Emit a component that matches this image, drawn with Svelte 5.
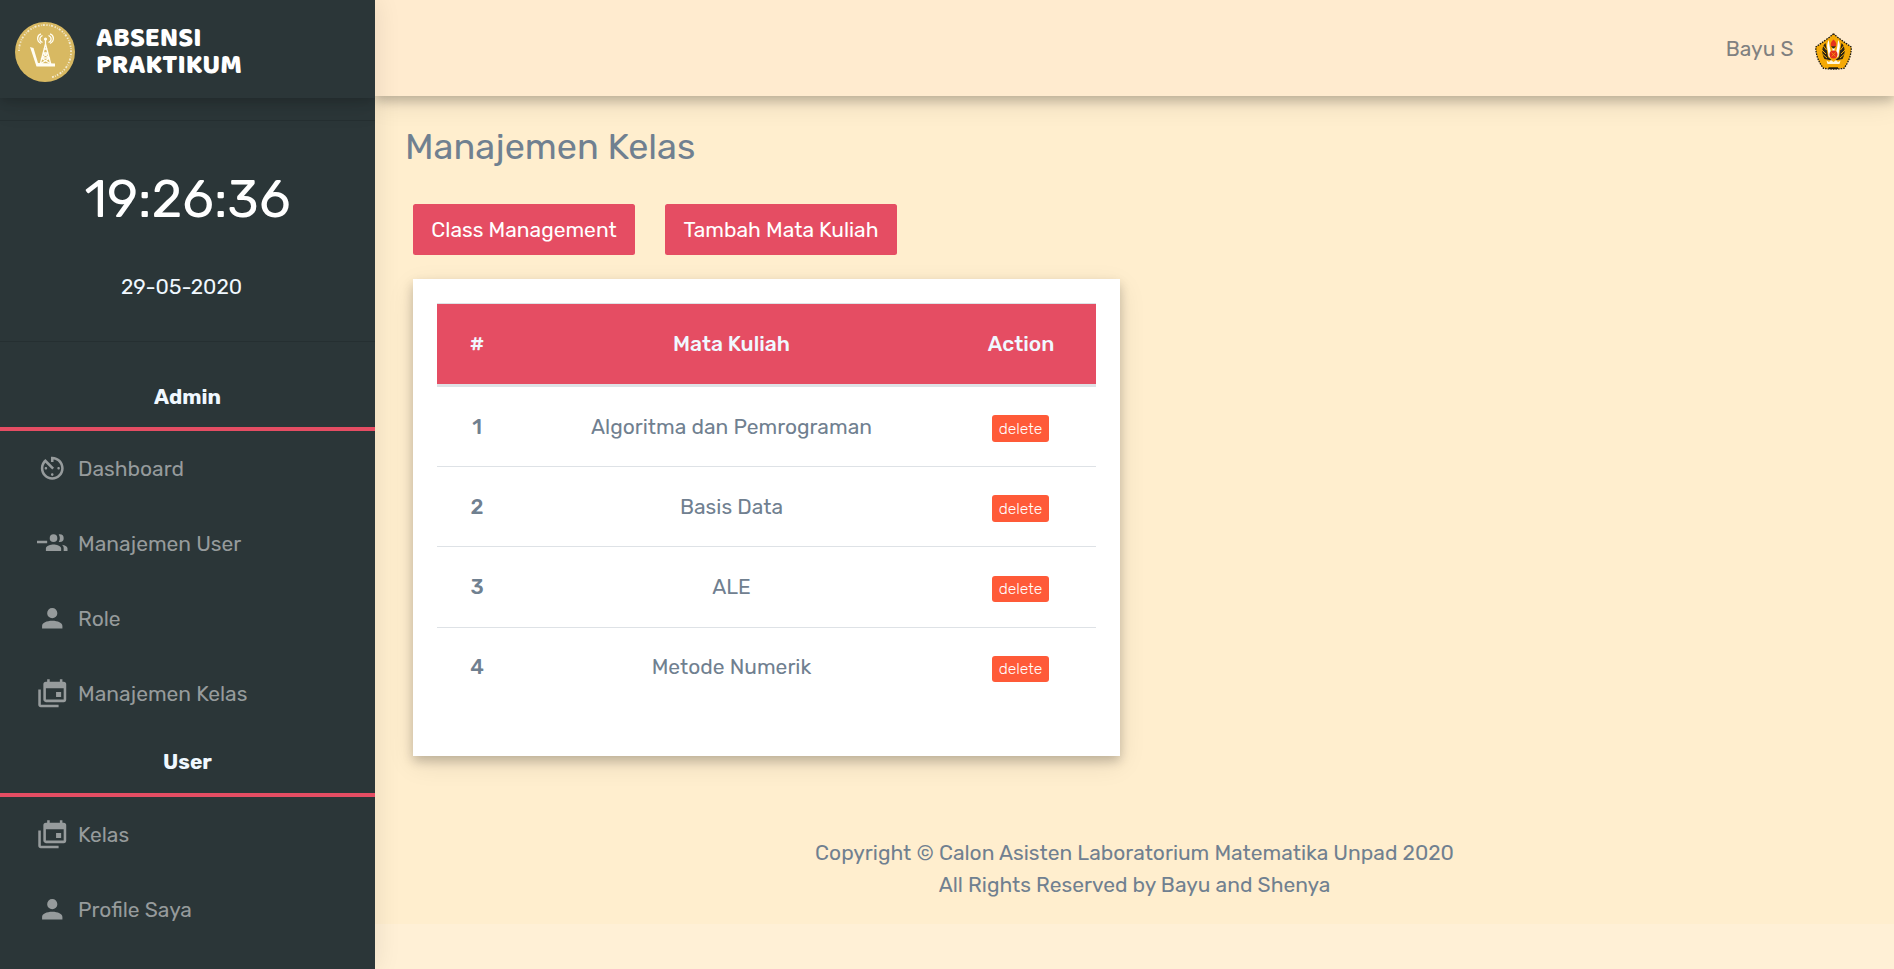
<script>
  const timer = 'M11 17c0 .55.45 1 1 1s1-.45 1-1-.45-1-1-1-1 .45-1 1zm0-14v4h2V5.08c3.39.49 6 3.39 6 6.92 0 3.87-3.13 7-7 7s-7-3.13-7-7c0-1.68.59-3.22 1.58-4.42L12 13l1.41-1.41-6.8-6.8v.02C4.42 6.45 3 9.05 3 12c0 4.97 4.02 9 9 9 4.97 0 9-4.03 9-9s-4.03-9-9-9h-1zm7 9c0-.55-.45-1-1-1s-1 .45-1 1 .45 1 1 1 1-.45 1-1zM6 12c0 .55.45 1 1 1s1-.45 1-1-.45-1-1-1-1 .45-1 1z';
  const group = 'M13 13c-2 0-6 1-6 3v2h12v-2c0-2-4-3-6-3m6.62.16c.83.72 1.38 1.66 1.38 2.84v2h3v-2c0-1.54-2.37-2.5-4.38-2.84M13 11a3 3 0 0 0 3-3 3 3 0 0 0-3-3 3 3 0 0 0-3 3 3 3 0 0 0 3 3m5 0a3 3 0 0 0 3-3 3 3 0 0 0-3-3c-.32 0-.63.05-.92.14.57.81.92 1.8.92 2.86s-.35 2.04-.92 2.85c.29.1.6.15.92.15M8 10H0v2h8v-2z';
  const person = 'M12 4a4 4 0 0 1 4 4 4 4 0 0 1-4 4 4 4 0 0 1-4-4 4 4 0 0 1 4-4m0 10c4.42 0 8 1.79 8 4v2H4v-2c0-2.21 3.58-4 8-4z';
  const calendar = 'M21 17V8H7v9h14m0-14a2 2 0 0 1 2 2v12a2 2 0 0 1-2 2H7c-1.11 0-2-.9-2-2V5a2 2 0 0 1 2-2h1V1h2v2h8V1h2v2h1M3 21h14v2H3c-1.11 0-2-.9-2-2V9h2v12m16-6h-4v-4h4v4z';

  const sections = [
    {
      title: 'Admin',
      items: [
        { label: 'Dashboard', icon: timer },
        { label: 'Manajemen User', icon: group },
        { label: 'Role', icon: person },
        { label: 'Manajemen Kelas', icon: calendar }
      ]
    },
    {
      title: 'User',
      items: [
        { label: 'Kelas', icon: calendar },
        { label: 'Profile Saya', icon: person }
      ]
    }
  ];

  const courses = ['Algoritma dan Pemrograman', 'Basis Data', 'ALE', 'Metode Numerik'];
</script>

<div class="page">
  <aside class="sidebar">
    <div class="brand">
      <svg class="seal" viewBox="0 0 60 60" aria-hidden="true">
        <circle cx="30" cy="30" r="30" fill="#d8b962" />
        <path d="M4 29A26 26 0 0 1 56 29A26 26 0 0 1 36 55.5" fill="none" stroke="#f3ead0" stroke-width="1.8" stroke-dasharray="1.3 1.5 .7 1.2 2 1.7" />
        <g fill="none" stroke="#fffdf2" stroke-width="1.3">
          <path d="M30.500 17V22L25 43M30.500 22L36 43M28.500 27H32.500M27.500 31L34 35.500M33.500 31L27 35.500M26 36L36 42M35 36L25 42M27.500 31H33.500M26.500 36H35" />
          <path d="M27.500 20.500C24 19 24 15 27.500 13.500M33.500 20.500C37 19 37 15 33.500 13.500M26 21.500C21 19 22 13 26 11.800M35 21.500C40 19 39 13 35 11.800" stroke-width="1.3" />
        </g>
        <circle cx="30.5" cy="17" r="1.6" fill="#fffdf2" />
        <path d="M15 25L18.500 26L23 41L40 41.500V44.500H21.500Z" fill="#fffdf2" />
      </svg>
      <div class="brand-name">ABSENSI<br />PRAKTIKUM</div>
    </div>
    <div class="clock">
      <div class="time">19:26:36</div>
      <div class="date">29-05-2020</div>
    </div>
    {#each sections as section}
      <section class="group">
        <h2>{section.title}</h2>
        <ul>
          {#each section.items as item}
            <li>
              <svg viewBox="0 0 24 24" aria-hidden="true"><path d={item.icon} /></svg>
              <span>{item.label}</span>
            </li>
          {/each}
        </ul>
      </section>
    {/each}
  </aside>

  <div class="main">
    <header class="topbar">
      <span>Bayu S</span>
      <svg class="crest" viewBox="0 0 37 37" aria-hidden="true">
        <path d="M18.500 .7C23 5 30 9.500 36.200 14C36.500 22 33.500 29 29 35.300C22 36.300 15 36.300 8.500 35.300C3.500 29 .8 22 .8 14C7 9.500 14 5 18.500 .7Z" fill="#f5a906" stroke="#1c1810" stroke-width="1.3" stroke-dasharray="1.6 1" />
        <path d="M10.500 10C7 13 6 20 9.500 26L17 27.500L13 24L12 18ZM26.500 10C30 13 31 20 27.500 26L20 27.500L24 24L25 18Z" fill="#2b2415" />
        <path d="M8.500 13L11.500 17M7 17L11 21M7.500 21L12 25M28.500 13L25.500 17M30 17L26 21M29.500 21L25 25" stroke="#f5a906" stroke-width="1" />
        <path d="M13.800 7C11.500 11 12 15 13 18L13.500 23L15.500 25L15.800 19L14.800 14ZM23.200 7C25.500 11 25 15 24 18L23.500 23L21.500 25L21.200 19L22.200 14Z" fill="#fff" />
        <path d="M17.500 15H19.500V19H17.500Z" fill="#fff" />
        <path d="M18.500 6.500C21.300 9 21.800 11 21 13.500H16C15.200 11 15.700 9 18.500 6.500Z" fill="#e6321c" />
        <path d="M16 13.200H21L19 15.500H18Z" fill="#2b2415" />
        <circle cx="18.5" cy="21.5" r="4" fill="#e6321c" />
        <path d="M16.500 19.500L20.500 23.500M20.500 19.500L16.500 23.500" stroke="#f5a906" stroke-width=".7" />
        <path d="M11.500 27.500L14 29L16 27L18.500 29L21 27L23 29L25.500 27.500L24.500 31H12.500Z" fill="#fff7dc" />
        <path d="M13.500 35.200H23" stroke="#1c1810" stroke-width="1.8" />
      </svg>
    </header>

    <main class="content">
      <h1>Manajemen Kelas</h1>
      <div class="actions">
        <button class="primary first">Class Management</button>
        <button class="primary second">Tambah Mata Kuliah</button>
      </div>
      <div class="card">
        <table>
          <thead>
            <tr><th class="num">#</th><th class="name">Mata Kuliah</th><th class="act">Action</th></tr>
          </thead>
          <tbody>
            {#each courses as course, i}
              <tr>
                <th>{i + 1}</th>
                <td>{course}</td>
                <td><button class="delete">delete</button></td>
              </tr>
            {/each}
          </tbody>
        </table>
      </div>
      <footer>
        <div>Copyright © Calon Asisten Laboratorium Matematika Unpad 2020</div>
        <div>All Rights Reserved by Bayu and Shenya</div>
      </footer>
    </main>
  </div>
</div>

<style>
  :global(body) {
    margin: 0;
    overflow: hidden;
  }
  .page {
    display: flex;
    height: 969px;
    background: #fff0d6;
    font-family: Rubik, Inter, sans-serif;
    font-size: 21px;
    line-height: 32px;
    color: slategray;
  }
  h1, h2, ul {
    margin: 0;
    padding: 0;
  }
  .sidebar {
    width: 375px;
    flex: none;
    background: #2b3638;
    box-shadow: 1px 0 25px rgba(0, 0, 0, 0.09);
    position: relative;
    z-index: 3;
  }
  .brand {
    height: 98px;
    box-sizing: border-box;
    padding: 6px 0 0 15px;
    display: flex;
    align-items: center;
    gap: 21px;
    box-shadow: 0 4px 9px rgba(0, 0, 0, 0.14), 0 7px 25px rgba(0, 0, 0, 0.1);
    clip-path: inset(0 0 -40px 0);
  }
  .seal {
    width: 60px;
    height: 60px;
  }
  .brand-name {
    font: 800 27.2px/26.6px "Baloo 2", "Noto Sans", sans-serif;
    color: #fff;
    padding-top: 2px;
  }
  .clock {
    margin-top: 22px;
    height: 222px;
    box-sizing: border-box;
    border: solid #252f31;
    border-width: 1px 0;
    text-align: center;
  }
  .time {
    color: #fff;
    font-size: 52.5px;
    line-height: 64px;
    padding-top: 46px;
  }
  .date {
    color: #f0f8ff;
    padding: 39.5px 12px 0 0;
  }
  .group h2 {
    box-sizing: border-box;
    height: 89px;
    padding-top: 39px;
    border-bottom: 4px solid #e54d63;
    text-align: center;
    font-size: 21px;
    line-height: 32px;
    font-weight: 700;
    color: #f0f8ff;
  }
  .group + .group h2 {
    height: 66px;
    padding-top: 15px;
  }
  .group ul {
    list-style: none;
  }
  li {
    height: 75px;
    display: flex;
    align-items: center;
    padding-left: 37px;
    gap: 10.5px;
    color: #969b9c;
  }
  li svg {
    width: 30.5px;
    height: 30.5px;
    margin-top: -1.5px;
    fill: currentColor;
    flex: none;
  }
  .main {
    flex: 1;
    min-width: 0;
  }
  .topbar {
    height: 96px;
    box-sizing: border-box;
    padding: 0 42px 0 0;
    background: #ffebcf;
    display: flex;
    justify-content: flex-end;
    align-items: center;
    gap: 21.5px;
    color: #808080;
    position: relative;
    z-index: 2;
    box-shadow: 0 5px 10px rgba(0, 0, 0, 0.2), 0 7.5px 25px rgba(0, 0, 0, 0.1);
  }
  .topbar span {
    padding-top: 2px;
  }
  .crest {
    width: 37px;
    height: 37px;
    margin-top: 6px;
  }
  .content {
    height: 828px;
    box-sizing: border-box;
    background: #ffeece;
    padding: 29px 0 0;
  }
  h1 {
    font-size: 36px;
    line-height: 44px;
    font-weight: 400;
    padding-left: 30px;
  }
  .actions {
    display: flex;
    gap: 30px;
    padding: 35px 0 0 38px;
  }
  button {
    border: 0;
    padding: 0;
    font-family: inherit;
    color: #fff;
  }
  .primary {
    height: 51px;
    border-radius: 2.5px;
    background: #e54d63;
    font-size: 21px;
  }
  .first {
    width: 222px;
  }
  .second {
    width: 232px;
  }
  .card {
    margin: 24px 0 0 38px;
    width: 707px;
    height: 477px;
    box-sizing: border-box;
    padding: 24px;
    background: #fff;
    box-shadow: 0 5px 10px rgba(0, 0, 0, 0.2), 0 7.5px 25px rgba(0, 0, 0, 0.1);
  }
  table {
    width: 659px;
    border-collapse: separate;
    border-spacing: 0;
    table-layout: fixed;
    text-align: center;
  }
  th, td {
    padding: 0;
    box-sizing: border-box;
    height: 80.3px;
    border-top: 1px solid #dee2e6;
    vertical-align: middle;
  }
  thead th {
    height: 84px;
    background: #e54d63;
    background-clip: padding-box;
    border-bottom: 3px solid #dee2e6;
    color: #f0f8ff;
  }
  th {
    font-weight: 500;
  }
  tbody tr:first-child > * {
    border-top: 0;
    height: 79px;
  }
  .num { width: 80px; }
  .act { width: 150px; }
  td:last-child {
    padding-right: 1px;
  }
  .delete {
    display: block;
    width: 57px;
    height: 26.5px;
    margin: 4px auto 0;
    border-radius: 3px;
    background: #ff5a38;
    font-size: 15.6px;
    font-weight: 300;
    line-height: 26px;
  }
  footer {
    margin-top: 81px;
    text-align: center;
  }
</style>
